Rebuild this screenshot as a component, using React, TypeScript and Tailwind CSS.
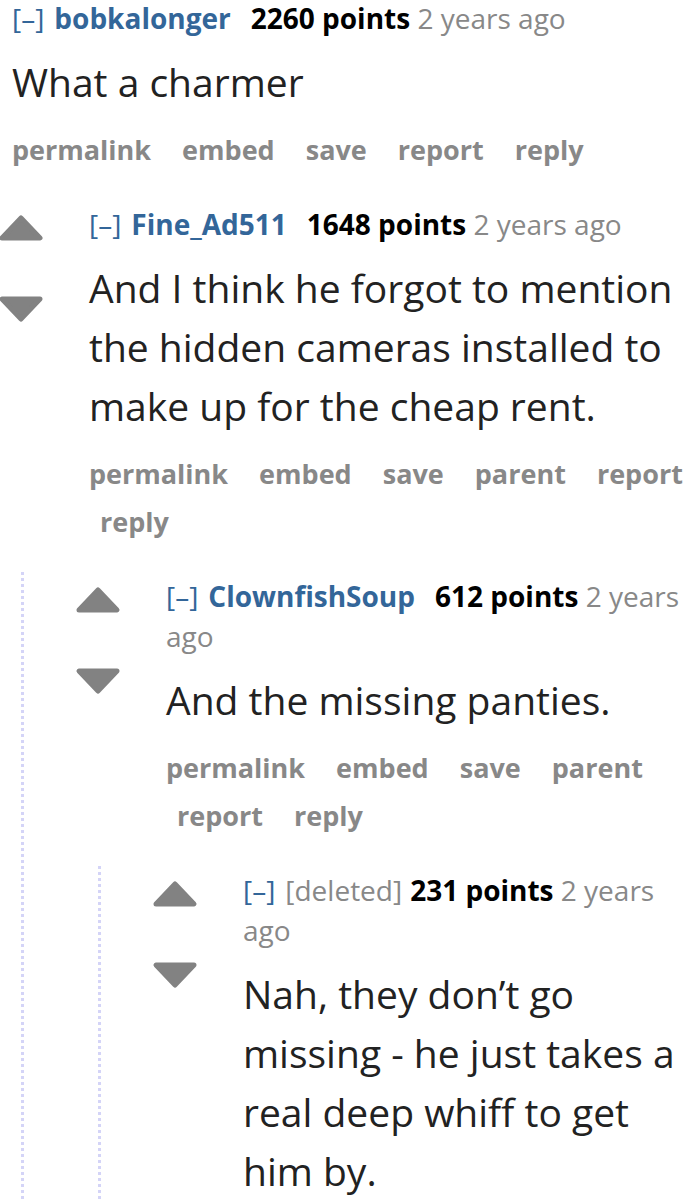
import { ReactNode } from 'react';

type ThingProps = {
  author: string;
  deleted?: boolean;
  points: string;
  body: string;
  actions: string[];
  children?: ReactNode;
};

function Arrows() {
  return (
    <div className="w-[46px] shrink-0 pt-[10px] flex flex-col items-center gap-[55px]">
      <svg width="46" height="27" viewBox="0 0 46 27">
        <path d="M4 24 L23 4 L42 24 Z" fill="#828282" stroke="#828282" strokeWidth="5" strokeLinejoin="round" />
      </svg>
      <svg width="46" height="27" viewBox="0 0 46 27">
        <path d="M4 3 L42 3 L23 23 Z" fill="#828282" stroke="#828282" strokeWidth="5" strokeLinejoin="round" />
      </svg>
    </div>
  );
}

function Thing({ author, deleted, points, body, actions, children }: ThingProps) {
  return (
    <div className="pt-[4px]">
      <div className="flex">
        <Arrows />
        <div className="ml-[45px] min-w-0 flex-1 pb-[26px]">
          <div className="text-[28px] leading-[40px]">
            <span className="text-[#369] mr-[10px]">[–]</span>
            {deleted ? (
              <span className="text-[#888] mr-[8px]">[deleted]</span>
            ) : (
              <span className="font-bold text-[#369] mr-[20px]">{author}</span>
            )}
            <span className="font-bold text-black">{points}</span>{' '}
            <span className="text-[#888]">2 years ago</span>
          </div>
          <p className="mt-[14px] text-[39px] leading-[59px] text-[#222]">{body}</p>
          <div className="mt-[15px] text-[27px] leading-[48px] font-bold text-[#888]">
            {actions.map((a, i) => (
              <span key={a}>
                <span className={'inline-block pr-[13px] ' + (i === 0 ? 'pl-0' : 'pl-[11px]')}>{a}</span>{' '}
              </span>
            ))}
          </div>
        </div>
      </div>
      {children && (
        <div className="ml-[23px] border-l-[3px] border-dotted border-[#d4d4f7] pl-[51px]">{children}</div>
      )}
    </div>
  );
}

export default function App() {
  const child = ['permalink', 'embed', 'save', 'parent', 'report', 'reply'];
  return (
    <div className="w-[700px] h-[1199px] overflow-hidden bg-white" style={{ fontFamily: '"Open Sans", "Noto Sans", sans-serif' }}>
      <div className="-ml-[79px] -mt-[6px]">
        <Thing
          author="bobkalonger"
          points="2260 points"
          body="What a charmer"
          actions={['permalink', 'embed', 'save', 'report', 'reply']}
        >
          <Thing
            author="Fine_Ad511"
            points="1648 points"
            body="And I think he forgot to mention the hidden cameras installed to make up for the cheap rent."
            actions={child}
          >
            <Thing author="ClownfishSoup" points="612 points" body="And the missing panties." actions={child}>
              <Thing
                author=""
                deleted
                points="231 points"
                body="Nah, they don’t go missing - he just takes a real deep whiff to get him by."
                actions={child}
              />
            </Thing>
          </Thing>
        </Thing>
      </div>
    </div>
  );
}
